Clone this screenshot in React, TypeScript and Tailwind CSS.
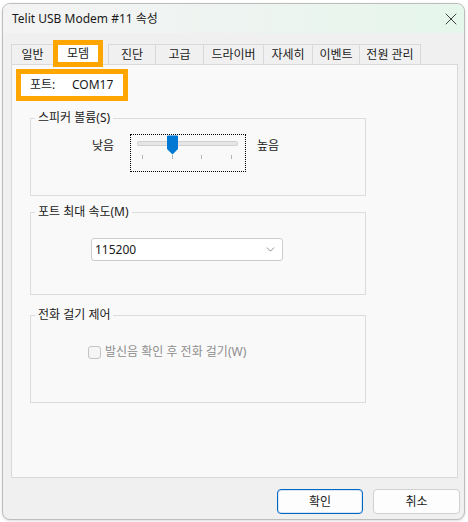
import { X, ChevronDown } from 'lucide-react';

const font = { fontFamily: '"Noto Sans", "Noto Sans CJK KR", sans-serif' };

const tabs = [
  { label: '진단', w: 'w-[47px]' },
  { label: '고급', w: 'w-[48px]' },
  { label: '드라이버', w: 'w-[60px]' },
  { label: '자세히', w: 'w-[49px]' },
  { label: '이벤트', w: 'w-[47px]' },
  { label: '전원 관리', w: 'w-[62px]' },
];

function Group({ title, h, className, children }: { title: string; h: string; className?: string; children: React.ReactNode }) {
  return (
    <fieldset className={`ml-[18px] w-[336px] ${h} border border-[#dcdcdc] ${className ?? ''}`}>
      <legend className="ml-[4px] px-[3px] leading-[16px] text-[#1a1a1a]">{title}</legend>
      {children}
    </fieldset>
  );
}

function VolumeSlider() {
  // 포커스 점선 안에 트랙, 썸, 눈금
  return (
    <div className="w-[116px] h-[38px] border border-dotted border-black">
      <svg width="114" height="36" viewBox="0 0 114 36">
        <rect x="6.5" y="6.5" width="100" height="4" rx="1" fill="#e6e6e6" stroke="#d0d0d0" />
        <path d="M37 0.5 H46 Q47 0.5 47 1.5 V14 L41.5 19.5 L36 14 V1.5 Q36 0.5 37 0.5 Z" fill="#0078d4" />
        {[11, 41, 70, 100].map((x) => (
          <line key={x} x1={x + 0.5} y1="20" x2={x + 0.5} y2="24" stroke="#b4b4b4" />
        ))}
      </svg>
    </div>
  );
}

export default function App() {
  return (
    <div className="w-[468px] h-[522px] bg-white text-[12px] text-[#1a1a1a]" style={font}>
      <div className="ml-[2px] mt-[3px] w-[463px] h-[517px] rounded-[8px] border border-[#bdbdbd] bg-[#f0f0f0] flex flex-col overflow-hidden shadow-[0_1px_3px_rgba(0,0,0,0.15)]">
        {/* 타이틀 바 */}
        <div className="h-[29px] flex items-center justify-between pl-[9px] pr-[3px] bg-gradient-to-r from-[#f3f3f3] via-[#eef4f1] to-[#e5f6eb]">
          <span className="leading-[16px] pt-[1px]">Telit USB Modem #11 속성</span>
          <X size={20} strokeWidth={1} className="text-[#1a1a1a]" />
        </div>

        <div className="flex-1 flex flex-col pl-[8px]">
          {/* 탭 */}
          <div className="mt-[7px] h-[24px] flex items-end">
            <div className="w-[42px] h-[20px] border-l border-t border-[#d9d9d9] flex items-center justify-center">일반</div>
            <div className="w-[55px] h-[24px] self-end">
              <div className="relative z-10 w-[50px] h-[27px] border-[5px] border-[#ffa500] bg-white flex items-center justify-center leading-[16px]">
                모뎀
              </div>
            </div>
            {tabs.map((t, i) => (
              <div
                key={t.label}
                className={`${t.w} h-[20px] border-l border-t border-[#d9d9d9] flex items-center justify-center ${i === tabs.length - 1 ? 'border-r' : ''}`}
              >
                {t.label}
              </div>
            ))}
          </div>

          {/* 탭 패널 */}
          <div className="w-[447px] h-[414px] border border-[#d9d9d9] bg-[#f9f9f9] flex flex-col">
            <div className="ml-[4px] mt-[4px] w-[112px] h-[32px] border-[5px] border-[#ffa500] bg-white flex items-center pl-[9px]">
              <span className="w-[42px]">포트:</span>
              <span>COM17</span>
            </div>

            <Group title="스피커 볼륨(S)" h="h-[86px]" className="mt-[9px]">
              <div className="flex items-start pl-[61px] pt-[8px]">
                <span className="w-[38px] mt-[4px] leading-[16px]">낮음</span>
                <VolumeSlider />
                <span className="ml-[11px] mt-[4px] leading-[16px]">높음</span>
              </div>
            </Group>

            <Group title="포트 최대 속도(M)" h="h-[91px]" className="mt-[8px]">
              <div className="pl-[60px] pt-[18px]">
                <div className="w-[192px] h-[23px] bg-white border border-[#cdcdcd] rounded-[3px] flex items-center justify-between pl-[3px] pr-[5px]">
                  <span>115200</span>
                  <ChevronDown size={13} strokeWidth={1.3} className="text-[#606060]" />
                </div>
              </div>
            </Group>

            <Group title="전화 걸기 제어" h="h-[96px]" className="mt-[12px]">
              <div className="pl-[57px] pt-[21px] flex items-center">
                <div className="w-[13px] h-[13px] rounded-[3px] border border-[#c4c4c4] bg-[#f5f5f5]" />
                <span className="ml-[4px] text-[#8e8e8e] leading-[16px]">발신음 확인 후 전화 걸기(W)</span>
              </div>
            </Group>
          </div>

          {/* 버튼 */}
          <div className="mt-[11px] flex justify-end gap-[10px] pr-[4px]">
            <button className="w-[86px] h-[25px] rounded-[4px] border border-[#0067c0] bg-[#fdfdfd] shadow-[inset_0_0_0_1px_#d6e6f5]">확인</button>
            <button className="w-[87px] h-[25px] rounded-[4px] border border-[#d0d0d0] bg-[#fdfdfd]">취소</button>
          </div>
        </div>
      </div>
    </div>
  );
}
